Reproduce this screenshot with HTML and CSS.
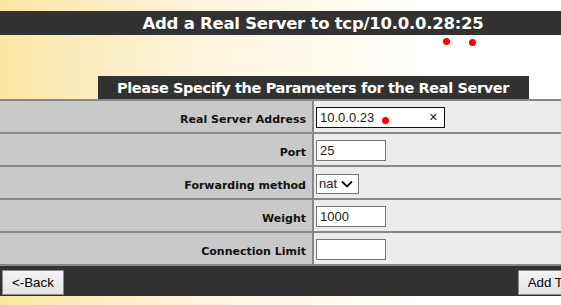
FILE: index.html
```html
<!DOCTYPE html>
<html>
<head>
<meta charset="utf-8">
<title>Add a Real Server</title>
<link rel="stylesheet" href="styles.css">
</head>
<body>
<div class="page">
  <h1 class="title">Add a Real Server to tcp/10.0.0.28:25</h1>
  <div class="gap"></div>
  <h2 class="subtitle">Please Specify the Parameters for the Real Server</h2>
  <form class="form">
    <div class="row">
      <div class="label">Real Server Address</div>
      <div class="value">
        <div class="addr">
          <input class="addr-input" type="text" value="10.0.0.23">
          <span class="clear">&#x2715;</span>
        </div>
      </div>
    </div>
    <div class="row">
      <div class="label">Port</div>
      <div class="value"><input class="field" type="text" value="25"></div>
    </div>
    <div class="row">
      <div class="label">Forwarding method</div>
      <div class="value">
        <div class="select"><span>nat</span>
          <svg class="chev" width="12" height="8" viewBox="0 0 12 8"><path d="M1 1.5 L6 6.5 L11 1.5" fill="none" stroke="#111" stroke-width="1.8"/></svg>
        </div>
      </div>
    </div>
    <div class="row">
      <div class="label">Weight</div>
      <div class="value"><input class="field" type="text" value="1000"></div>
    </div>
    <div class="row">
      <div class="label">Connection Limit</div>
      <div class="value"><input class="field" type="text" value=""></div>
    </div>
    <div class="footer">
      <button type="button" class="btn">&lt;-Back</button>
      <button type="button" class="btn">Add This Server</button>
    </div>
  </form>
</div>
<span class="dot dot1"></span>
<span class="dot dot2"></span>
<span class="dot dot3"></span>
</body>
</html>
```
FILE: styles.css
```css
html, body {
  margin: 0;
  padding: 0;
}
body {
  width: 561px;
  height: 305px;
  overflow: hidden;
  position: relative;
  background: linear-gradient(to right, #fbe5a2 0, #fcedc0 90px, #fdf5db 200px, #fffbee 320px, #ffffff 430px);
  font-family: "DejaVu Sans", Verdana, sans-serif;
}
.page {
  width: 626px;
  padding-top: 11px;
}
.title {
  margin: 0;
  height: 24px;
  line-height: 25px;
  background: #323232;
  color: #fff;
  font-size: 16.5px;
  letter-spacing: -0.25px;
  font-weight: bold;
  text-align: center;
}
.gap {
  height: 41px;
}
.subtitle {
  margin: 0 auto;
  width: 431px;
  height: 23px;
  line-height: 24px;
  background: #323232;
  color: #fff;
  font-size: 14.5px;
  letter-spacing: -0.38px;
  font-weight: bold;
  text-align: center;
}
.form {
  margin: 0;
  width: 635px;
  border-top: 2px solid #888;
}
.row {
  display: grid;
  grid-template-columns: 314px 1fr;
  height: 33px;
  box-sizing: border-box;
  border-bottom: 2px solid #888;
}
.label {
  background: #c9c9c9;
  border-right: 2px solid #888;
  display: flex;
  align-items: center;
  justify-content: flex-end;
  padding: 5px 6px 0 0;
  font-size: 11px;
  font-weight: bold;
  color: #111;
}
.value {
  background: #ececec;
  display: flex;
  align-items: center;
  padding: 2px 0 0 2px;
}
.field {
  box-sizing: border-box;
  width: 70px;
  height: 21px;
  border: 1px solid #767676;
  padding: 0 3px;
  margin: 0;
  background: #fff;
  font-family: "Liberation Sans", Arial, sans-serif;
  font-size: 13px;
  color: #222;
}
.addr {
  box-sizing: border-box;
  width: 129px;
  height: 21px;
  border: 1px solid #111;
  background: #fff;
  display: flex;
  align-items: center;
}
.addr-input {
  border: 0;
  outline: 0;
  margin: 0;
  padding: 0 0 0 3px;
  width: 100px;
  height: 19px;
  background: transparent;
  font-family: "Liberation Sans", Arial, sans-serif;
  font-size: 13px;
  color: #222;
}
.clear {
  margin-left: auto;
  margin-right: 6px;
  font-family: "DejaVu Sans", sans-serif;
  font-size: 11px;
  color: #222;
  line-height: 1;
}
.select {
  box-sizing: border-box;
  width: 43px;
  height: 20px;
  border: 1px solid #767676;
  background: #fff;
  display: flex;
  align-items: center;
  gap: 4px;
  padding-left: 2px;
  font-family: "Liberation Sans", Arial, sans-serif;
  font-size: 13px;
  color: #222;
}
.footer {
  height: 30px;
  background: #323232;
  display: flex;
  justify-content: space-between;
  align-items: flex-start;
  padding: 4px 2px 0;
  box-sizing: border-box;
}
.btn {
  height: 25px;
  margin: 0;
  padding: 0 9px;
  border: 1px solid #8a8a8a;
  background: linear-gradient(#f3f3f3, #e5e5e5);
  font-family: "Liberation Sans", Arial, sans-serif;
  font-size: 13.33px;
  color: #000;
}
.dot {
  position: absolute;
  width: 7px;
  height: 7px;
  border-radius: 50%;
  background: #ff0000;
}
.dot1 { left: 443px; top: 38px; }
.dot2 { left: 469px; top: 39px; }
.dot3 { left: 382px; top: 117px; }
```
